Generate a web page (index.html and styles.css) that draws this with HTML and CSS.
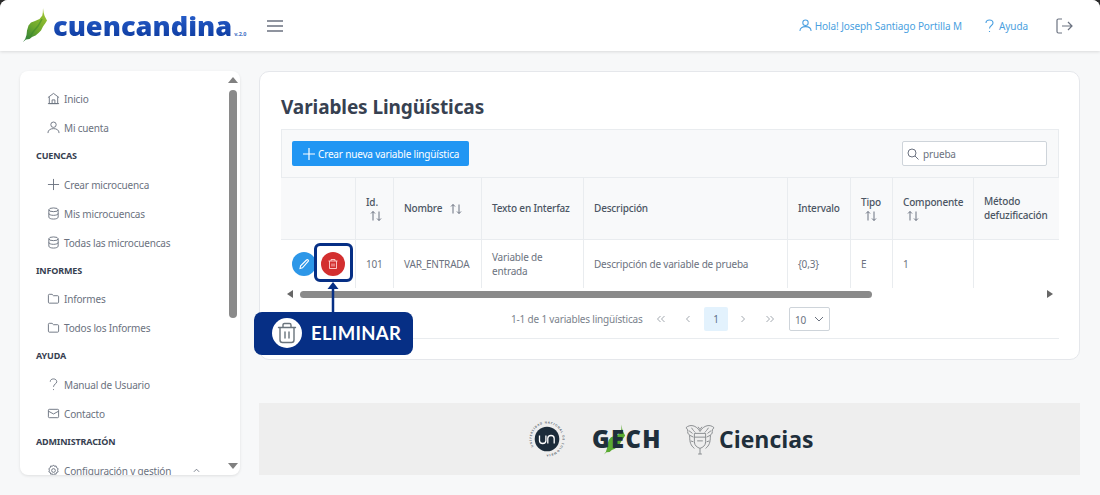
FILE: index.html
```html
<!DOCTYPE html>
<html lang="es">
<head>
<meta charset="utf-8">
<title>Variables Lingüísticas</title>
<link rel="stylesheet" href="styles.css">
</head>
<body>
<div class="app">
  <header class="topbar">
    <div class="brand">
      <svg class="leaf" width="26" height="36" viewBox="0 0 26 36"><defs><linearGradient id="lg" x1="0.8" y1="0.1" x2="0.2" y2="1"><stop offset="0" stop-color="#9ac232"/><stop offset=".55" stop-color="#6aa62c"/><stop offset="1" stop-color="#2f7f3a"/></linearGradient></defs><path d="M21 1l.6 4.500 1 3.500 2.400 4.500-1.500 2.500-2.500 3.500-2 4-2.500 2.500-3 2.500-3.500 1.500-2.500 2-3.500.5L1 35l2.200-3 1.300-4 .5-4.500 1.500-5 2.500-3 4-1.500 4.500-2 2.800-3.500.5-3z" fill="url(#lg)"/><path d="M20 12l-4 7-5 6-3 5" fill="none" stroke="#3d8a2c" stroke-width="1.500" opacity=".6"/></svg>
      <span class="brand-name">cuencandina</span><span class="brand-ver">v.2.0</span>
    </div>
    <svg class="burger" width="16" height="12" viewBox="0 0 16 12"><path d="M0 1h16M0 6h16M0 11h16" fill="none" stroke="#6b7280" stroke-width="1.3"/></svg>
    <nav class="top-links">
      <a class="top-link user"><svg width="13" height="13" viewBox="0 0 14 14"><circle cx="7" cy="4" r="2.9" fill="none" stroke="#4a9fe0" stroke-width="1.1"/><path d="M1 13c0-3.300 2.700-4.800 6-4.800s6 1.500 6 4.800" fill="none" stroke="#4a9fe0" stroke-width="1.1"/></svg>Hola! Joseph Santiago Portilla M</a>
      <a class="top-link help"><svg width="9" height="14" viewBox="0 0 9 14"><path d="M1 4c0-2 1.500-3 3.500-3S8 2.200 8 4c0 2.500-3.500 2.500-3.500 5.500M4.500 12v1" fill="none" stroke="#4a9fe0" stroke-width="1.100"/></svg>Ayuda</a>
      <svg class="logout" width="17" height="16" viewBox="0 0 17 16"><path d="M6 1H2.500C1.600 1 1 1.600 1 2.500v11c0 .9.6 1.500 1.500 1.500H6M6 8h10M12 4l4 4-4 4" fill="none" stroke="#6b7280" stroke-width="1.200"/></svg>
    </nav>
  </header>

  <main class="layout">
    <aside class="sidebar">
      <div class="side-nav">
        <a class="item"><svg viewBox="0 0 14 14"><path d="M1 6l6-4.500L13 6M2.500 5.500V12.500h9V5.500M5.500 12.500V8.500h3v4M1 12.500h12"/></svg>Inicio</a>
        <a class="item"><svg viewBox="0 0 14 14"><circle cx="7" cy="4" r="2.900"/><path d="M1 13c0-3.300 2.700-4.800 6-4.800s6 1.500 6 4.800"/></svg>Mi cuenta</a>
        <div class="heading">CUENCAS</div>
        <a class="item"><svg viewBox="0 0 14 14"><path d="M7 1v12M1 7h12"/></svg>Crear microcuenca</a>
        <a class="item"><svg viewBox="0 0 14 14"><ellipse cx="7" cy="3" rx="5" ry="2"/><path d="M2 3v8c0 1.100 2.200 2 5 2s5-.9 5-2V3M2 7c0 1.100 2.200 2 5 2s5-.9 5-2"/></svg>Mis microcuencas</a>
        <a class="item"><svg viewBox="0 0 14 14"><ellipse cx="7" cy="3" rx="5" ry="2"/><path d="M2 3v8c0 1.100 2.200 2 5 2s5-.9 5-2V3M2 7c0 1.100 2.200 2 5 2s5-.9 5-2"/></svg>Todas las microcuencas</a>
        <div class="heading tight">INFORMES</div>
        <a class="item"><svg viewBox="0 0 14 14"><path d="M1.500 3.500c0-.6.400-1 1-1h3l1.500 1.500h4.500c.6 0 1 .4 1 1v6c0 .6-.4 1-1 1h-9c-.6 0-1-.4-1-1z"/></svg>Informes</a>
        <a class="item"><svg viewBox="0 0 14 14"><path d="M1.500 3.500c0-.6.400-1 1-1h3l1.500 1.500h4.500c.6 0 1 .4 1 1v6c0 .6-.4 1-1 1h-9c-.6 0-1-.4-1-1z"/></svg>Todos los Informes</a>
        <div class="heading">AYUDA</div>
        <a class="item"><svg viewBox="0 0 14 14"><path d="M3.500 4c0-2 1.500-3 3.500-3s3.500 1.200 3.500 3c0 2.500-3.500 2.500-3.500 5.500M7 12v1"/></svg>Manual de Usuario</a>
        <a class="item"><svg viewBox="0 0 14 14"><rect x="1.500" y="2.500" width="11" height="9" rx="1"/><path d="M1.500 4.500L7 7.500l5.500-3"/></svg>Contacto</a>
        <div class="heading">ADMINISTRACIÓN</div>
        <a class="item"><svg viewBox="0 0 14 14"><circle cx="7" cy="7" r="2"/><path d="M7 1l1 1.500 1.800-.4.4 1.800L12 5l-.6 1.700.6 1.800-1.800.7-.4 1.800-1.800-.4L7 12.500 5.800 10.600l-1.800.4-.4-1.800L2 8.500l.6-1.800L2 5l1.600-1.100.4-1.800 1.800.4z"/></svg>Configuración y gestión<svg class="caret" viewBox="0 0 8 5"><path d="M1 4l3-3 3 3"/></svg></a>
      </div>
      <div class="side-scroll">
        <i class="arrow-up"></i>
        <i class="side-thumb"></i>
        <i class="arrow-down"></i>
      </div>
    </aside>

    <section class="content">
      <div class="card">
        <h1 class="title">Variables Lingüísticas</h1>
        <div class="panel">
          <div class="toolbar">
            <button class="btn-new"><svg width="12" height="12" viewBox="0 0 12 12"><path d="M6 0v12M0 6h12" stroke="#fff" stroke-width="1.200" fill="none"/></svg>Crear nueva variable lingüística</button>
            <label class="search"><svg width="12" height="12" viewBox="0 0 12 12"><circle cx="5" cy="5" r="4" fill="none" stroke="#6b7280"/><path d="M8 8l3.500 3.500" stroke="#6b7280" fill="none"/></svg><span>prueba</span></label>
          </div>
          <div class="table-clip">
            <table class="grid">
              <colgroup><col class="c1"><col class="c2"><col class="c3"><col class="c4"><col class="c5"><col class="c6"><col class="c7"><col class="c8"><col class="c9"></colgroup>
              <thead>
                <tr>
                  <th></th>
                  <th class="stack">Id.<svg class="sort" viewBox="0 0 12 11"><path d="M3 10V1M1 3l2-2 2 2M9 1v9M7 8l2 2 2-2"/></svg></th>
                  <th>Nombre<svg class="sort inline" viewBox="0 0 12 11"><path d="M3 10V1M1 3l2-2 2 2M9 1v9M7 8l2 2 2-2"/></svg></th>
                  <th>Texto en Interfaz</th>
                  <th>Descripción</th>
                  <th>Intervalo</th>
                  <th class="stack">Tipo<svg class="sort" viewBox="0 0 12 11"><path d="M3 10V1M1 3l2-2 2 2M9 1v9M7 8l2 2 2-2"/></svg></th>
                  <th class="stack">Componente<svg class="sort" viewBox="0 0 12 11"><path d="M3 10V1M1 3l2-2 2 2M9 1v9M7 8l2 2 2-2"/></svg></th>
                  <th>Método defuzificación</th>
                </tr>
              </thead>
              <tbody>
                <tr>
                  <td class="actions">
                    <div class="action-row">
                      <span class="round blue"><svg width="12" height="12" viewBox="0 0 12 12"><path d="M2 10.500l.6-2.600L8.500 2c.5-.5 1.200-.5 1.600 0 .4.400.4 1.100 0 1.500L4.500 9.800z" fill="none" stroke="#fff" stroke-width="1.100"/></svg></span>
                      <span class="round red"><svg width="12" height="12" viewBox="0 0 12 12"><path d="M1.500 3h9M4 3V1.500h4V3M2.500 3v7.500h7V3M5 5.500v3M7 5.500v3" fill="none" stroke="#ffd5d5" stroke-width=".9"/></svg></span>
                    </div>
                  </td>
                  <td>101</td>
                  <td>VAR_ENTRADA</td>
                  <td>Variable de entrada</td>
                  <td>Descripción de variable de prueba</td>
                  <td>{0,3}</td>
                  <td>E</td>
                  <td>1</td>
                  <td></td>
                </tr>
              </tbody>
            </table>
          </div>
          <div class="hscroll"><i class="arrow-left"></i><span class="hscroll-track"><i class="hscroll-thumb"></i></span><i class="arrow-right"></i></div>
          <div class="pager">
            <span class="pager-text">1-1 de 1 variables lingüísticas</span>
            <span class="pg"><svg viewBox="0 0 10 8"><path d="M4.500 1l-3 3 3 3M8.500 1l-3 3 3 3"/></svg></span>
            <span class="pg"><svg viewBox="0 0 10 8"><path d="M6.500 1l-3 3 3 3"/></svg></span>
            <span class="pg current">1</span>
            <span class="pg"><svg viewBox="0 0 10 8"><path d="M3.500 1l3 3-3 3"/></svg></span>
            <span class="pg"><svg viewBox="0 0 10 8"><path d="M1.500 1l3 3-3 3M5.500 1l3 3-3 3"/></svg></span>
            <span class="per-page">10<svg viewBox="0 0 10 6"><path d="M1 1l4 4 4-4"/></svg></span>
          </div>
        </div>
      </div>
      <footer class="logos">
        <svg class="logo-un" width="38" height="38" viewBox="0 0 38 38"><defs><path id="ring" d="M5.600 26.750A15.500 15.500 0 1 1 32.400 26.750A15.500 15.500 0 0 1 5.600 26.750"/></defs><circle cx="19" cy="19" r="12.300" fill="#1c2c3a"/><path d="M11.500 15.500v5c0 2 1.400 3 3.200 3s3.200-1 3.200-3v-5M19.800 23.500v-5c0-2 1.400-3 3.200-3s3.200 1 3.200 3v5" fill="none" stroke="#fff" stroke-width="1.300"/><text class="ring-text"><textPath href="#ring">UNIVERSIDAD NACIONAL DE COLOMBIA</textPath></text></svg>
        <div class="logo-gech"><svg class="gech-leaf" width="23" height="33" viewBox="0 0 26 36"><path d="M21 1l.6 4.500 1 3.500 2.400 4.500-1.500 2.500-2.500 3.500-2 4-2.500 2.500-3 2.500-3.500 1.500-2.500 2-3.500.5L1 35l2.200-3 1.300-4 .5-4.500 1.500-5 2.500-3 4-1.500 4.500-2 2.800-3.500.5-3z" fill="#5aaa32"/></svg><span class="gech-text">GECH</span></div>
        <svg class="logo-crest" width="30" height="34" viewBox="0 0 32 34"><g fill="none" stroke="#85898c" stroke-width="1"><path d="M10 11h12v9c0 4-3 6-6 7-3-1-6-3-6-7z"/><path d="M10 15h12M13 19h6M16 27v6M14 33h4"/><path d="M16 9C12 2 5 1 1 5c2 1 2 3 2 6 1 0 2 2 2 4 0 5 1 9 5 12M16 9c4-7 11-8 15-4-2 1-2 3-2 6-1 0-2 2-2 4 0 5-1 9-5 12"/><path d="M7 5c1 2 3 4 4 5M25 5c-1 2-3 4-4 5M4 8l4 3M28 8l-4 3M5 13l4 2M27 13l-4 2M6 19l3 1M26 19l-3 1M14 4l2 3 2-3"/></g></svg>
        <span class="logo-ciencias">Ciencias</span>
      </footer>
    </section>
  </main>

  <div class="hl-box"></div>
  <svg class="hl-arrow" width="12" height="32" viewBox="0 0 12 32"><path d="M6 3v29" stroke="#062f85" stroke-width="2.500"/><path d="M6 0l5.500 7H.5z" fill="#062f85"/></svg>
  <div class="hl-pill">
    <span class="hl-icon"><svg width="20" height="22" viewBox="0 0 20 22"><path d="M1.500 5.500h17M6 5.500V3c0-1 .6-1.500 1.500-1.500h5c.9 0 1.500.5 1.500 1.500v2.500M3 5.500V18c0 1.500 1 2.500 2.500 2.500h9c1.500 0 2.500-1 2.500-2.500V5.500M8 10v6M12 10v6" fill="none" stroke="#6a747c" stroke-width="1.400" stroke-linecap="round"/></svg></span>
    <span class="hl-label">ELIMINAR</span>
  </div>
</div>
</body>
</html>
```

FILE: styles.css
```css
* { box-sizing: border-box; }
html { background: #2b2b2b; }
body { margin: 0; width: 1100px; height: 495px; overflow: hidden; font-family: "Noto Sans", "Open Sans", sans-serif; color: #6b7280; letter-spacing: -.18px; }
.app { position: relative; width: 1100px; height: 495px; background: #f7f8f9; border-radius: 8px 8px 0 0; overflow: hidden; }

.topbar { display: flex; align-items: center; height: 51px; background: #fff; box-shadow: 0 1px 3px rgba(0,0,0,.12); padding-left: 22px; }
.brand { display: flex; align-items: center; width: 245px; height: 51px; }
.leaf { flex: none; margin-top: -1px; }
.brand-name { font-family: "Open Sans", sans-serif; font-weight: 800; font-size: 27.200px; line-height: 1; margin: 0 0 0 5px; padding-top: 1px; color: #1649b4; letter-spacing: 0; background: linear-gradient(#2a62d0, #0d3a9e); -webkit-background-clip: text; background-clip: text; -webkit-text-fill-color: transparent; }
.brand-ver { font-size: 5.500px; letter-spacing: 0; font-weight: 700; color: #3f6fc4; align-self: flex-end; margin: 0 0 13px 2px; }
.top-links { margin-left: auto; display: flex; align-items: center; padding-right: 27px; }
.top-link { display: flex; align-items: center; font-size: 10px; letter-spacing: -.08px; color: #4a9fe0; }
.user { gap: 3px; margin-right: 23px; }
.help { gap: 5px; margin-right: 28px; }
.logout { display: block; }

.layout { display: flex; gap: 19px; padding: 20px 20px 0; height: 424px; }
.sidebar { display: flex; flex: none; width: 220px; height: 404px; background: #fff; border-radius: 8px; box-shadow: 0 1px 3px rgba(0,0,0,.1); overflow: hidden; }
.side-nav { flex: 1; padding: 13px 0 0 16px; overflow: hidden; }
.item { display: flex; align-items: center; height: 29px; padding-left: 11px; font-size: 10px; color: #6b7280; white-space: nowrap; }
.item svg { width: 13px; height: 13px; margin-right: 4px; fill: none; stroke: #6b7280; stroke-width: 1; flex: none; }
.item svg.caret { width: 7px; height: 5px; margin: 0 0 0 22px; }
.heading { display: flex; align-items: center; height: 28px; padding-bottom: 2px; font-size: 9px; font-weight: 700; color: #374151; letter-spacing: -.15px; }
.heading.tight { height: 27px; padding-bottom: 1px; }
.side-scroll { flex: none; width: 13px; display: flex; flex-direction: column; align-items: center; padding-top: 6px; padding-right: 1px; }
.arrow-up { width: 0; height: 0; border: 5px solid transparent; border-top: 0; border-bottom: 6px solid #808080; }
.side-thumb { width: 8px; height: 228px; margin-top: 7px; border-radius: 4px; background: #8a8a8a; }
.arrow-down { width: 0; height: 0; border: 5px solid transparent; border-bottom: 0; border-top: 6px solid #808080; margin-top: 145px; }

.content { flex: 1; min-width: 0; display: flex; flex-direction: column; gap: 43px; }
.card { height: 289px; background: #fff; border: 1px solid #e5e7eb; border-radius: 10px; padding: 22px 20px 0 21px; }
.title { margin: 0 0 9px; font-size: 19px; line-height: 26px; font-weight: 700; color: #374151; letter-spacing: -.1px; }
.panel { height: 210px; border-bottom: 1px solid #e9ecef; }
.toolbar { display: flex; justify-content: space-between; align-items: center; height: 49px; padding: 0 11px 0 10px; background: #f8f9fa; border: 1px solid #e9ecef; }
.btn-new { display: flex; align-items: center; gap: 3px; height: 25px; width: 177px; padding: 0 0 0 11px; border: 0; border-radius: 2px; background: #2196f3; color: #fff; font: 10px "Noto Sans", sans-serif; letter-spacing: -.18px; white-space: nowrap; }
.search { display: flex; align-items: center; gap: 4px; width: 145px; height: 25px; padding-left: 4px; background: #fff; border: 1px solid #ced4da; border-radius: 2px; font-size: 10px; color: #6b7280; }
.table-clip { overflow: hidden; height: 110px; }
.grid { table-layout: fixed; width: 786px; border-collapse: collapse; font-size: 10px; }
.c1 { width: 74px; } .c2 { width: 38px; } .c3 { width: 88px; } .c4 { width: 102px; } .c5 { width: 204px; } .c6 { width: 63px; } .c7 { width: 42px; } .c8 { width: 81px; } .c9 { width: 94px; }
.grid th { height: 61px; padding: 0 9px 0 10.500px; background: #f8f9fa; border: 1px solid #e9ecef; border-top: 0; text-align: left; font-weight: 500; color: #4b5563; line-height: 14px; }
.grid th:first-child, .grid td:first-child { border-left: 0; }
.grid td { height: 49px; padding: 0 9px 0 10.500px; background: #fff; border: 1px solid #e9ecef; line-height: 14px; color: #6b7280; }
.grid tr > :last-child { border-right: 0; }
.sort { width: 12px; height: 12px; fill: none; stroke: #6b7280; stroke-width: 1; }
.stack .sort { display: block; margin: 1px 0 0 4px; }
.sort.inline { margin-left: 8px; vertical-align: -3px; }
.action-row { display: flex; gap: 5px; }
.round { display: flex; align-items: center; justify-content: center; flex: none; width: 24px; height: 24px; border-radius: 50%; }
.round.blue { background: #2d97e8; }
.round.red { background: #d32f2f; }

.hscroll { display: flex; align-items: center; height: 12px; padding: 0 6px; }
.arrow-left { width: 0; height: 0; border: 4.500px solid transparent; border-left: 0; border-right: 6px solid #666; }
.arrow-right { width: 0; height: 0; border: 4.500px solid transparent; border-right: 0; border-left: 6px solid #666; }
.hscroll-track { flex: 1; margin: 0 6px 0 7px; }
.hscroll-thumb { display: block; width: 572px; height: 7px; border-radius: 4px; background: #8a8a8a; }

.pager { display: flex; align-items: center; height: 38px; font-size: 10px; padding-left: 230px; }
.pager-text { width: 137px; color: #7a828c; white-space: nowrap; }
.pg { display: flex; align-items: center; justify-content: center; width: 26px; height: 24px; margin-right: 1px; color: #6b7280; }
.pg svg { width: 10px; height: 8px; fill: none; stroke: #a3a9b0; stroke-width: 1; }
.pg.current { width: 24px; margin: 0 2px; background: #e3f2fd; border-radius: 2px; color: #5b7088; }
.per-page { display: flex; align-items: center; justify-content: space-between; width: 41px; height: 24px; margin-left: 5px; padding: 2px 5px 0; background: #fff; border: 1px solid #ced4da; border-radius: 2px; }
.per-page svg { width: 10px; height: 6px; margin-top: -3px; fill: none; stroke: #6b7280; stroke-width: 1; }

.logos { display: flex; align-items: center; height: 72px; background: #eeeeee; padding-left: 269px; }
.logo-un { display: block; flex: none; margin-right: 26px; }
.ring-text { font-size: 2.900px; font-weight: 600; fill: #4b5563; letter-spacing: .8px; }
.logo-gech { position: relative; flex: none; width: 68px; margin-right: 25px; font-family: "Open Sans", sans-serif; font-weight: 800; font-size: 23.800px; line-height: 30px; letter-spacing: 1.400px; color: #1f2f3b; }
.gech-leaf { position: absolute; left: 11px; top: -1px; }
.gech-text { position: relative; }
.logo-crest { display: block; flex: none; margin-right: 4px; }
.logo-ciencias { font-family: "Open Sans", sans-serif; font-weight: 700; font-size: 23px; letter-spacing: 0; line-height: 30px; color: #1f2f3b; }

.hl-box { position: absolute; left: 314px; top: 243px; width: 39px; height: 39px; border: 3px solid #062f85; border-radius: 6px; }
.hl-arrow { position: absolute; left: 327px; top: 282px; display: block; }
.hl-pill { position: absolute; left: 254px; top: 312px; display: flex; align-items: center; width: 159px; height: 43px; padding: 0 0 1px 18px; background: #062f85; border-radius: 8px; }
.hl-icon { display: flex; align-items: center; justify-content: center; width: 30px; height: 30px; border-radius: 50%; background: #fff; }
.hl-label { margin-left: 9px; font-family: Lato, sans-serif; font-weight: 700; font-size: 18.500px; color: #fff; letter-spacing: .3px; }
```
